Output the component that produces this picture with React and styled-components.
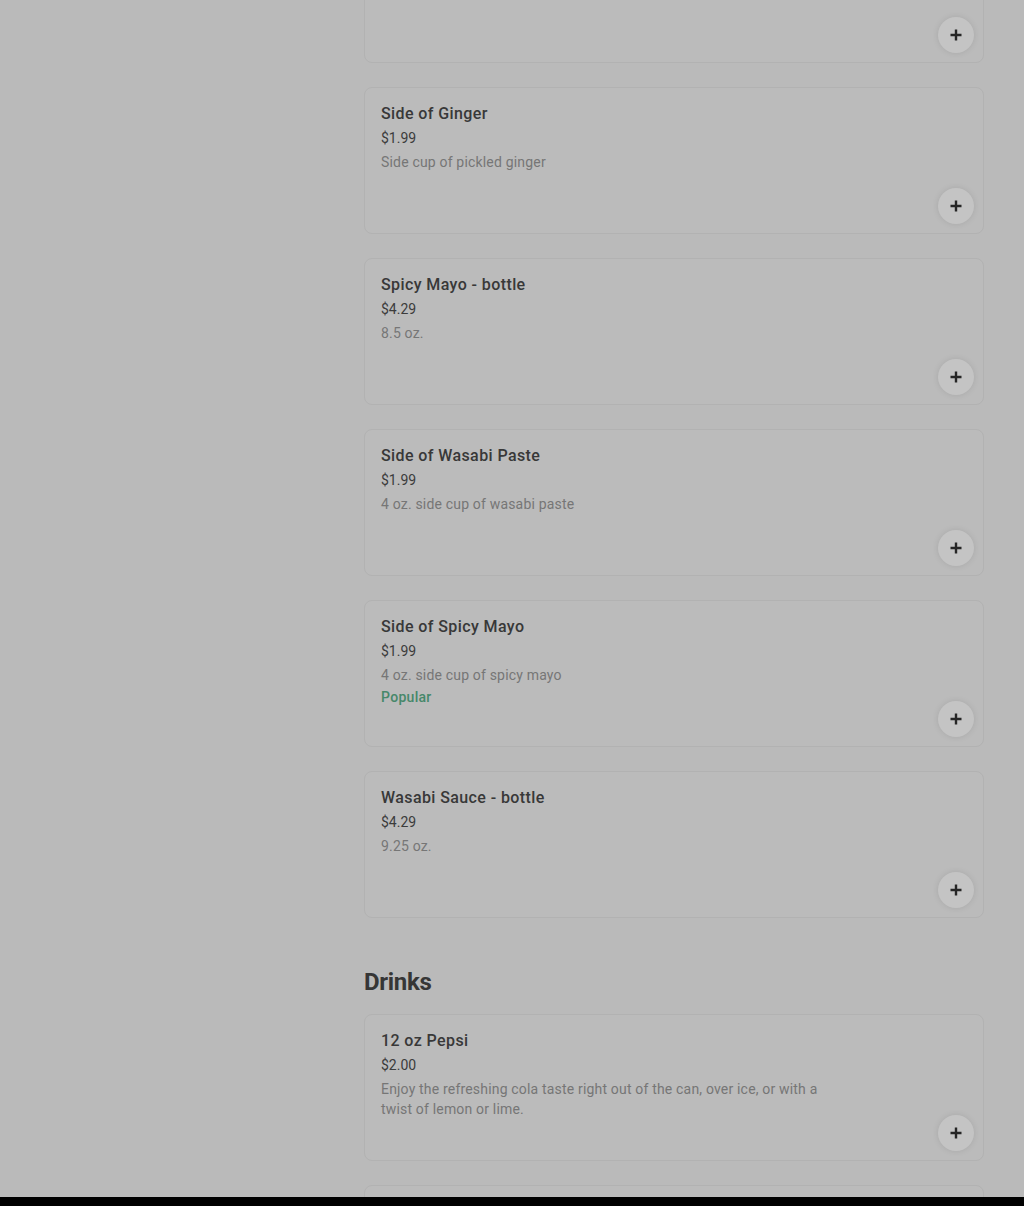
import React from "react";
import styled, { createGlobalStyle } from "styled-components";

const Global = createGlobalStyle`
  html, body { margin: 0; padding: 0; background: #bababa; }
  body { font-family: Roboto, "Liberation Sans", Arial, sans-serif; overflow: hidden; }
  * { box-sizing: border-box; }
`;

const Page = styled.div`
  display: grid;
  grid-template-columns: 364px 620px 1fr;
  height: 1206px;
  overflow: hidden;
`;

const Main = styled.main`
  grid-column: 2;
  margin-top: -84px;
  display: flex;
  flex-direction: column;
`;

const Section = styled.section`
  display: flex;
  flex-direction: column;
`;

const Heading = styled.h2`
  margin: 48px 0 16px;
  font-size: 24px;
  line-height: 32px;
  font-weight: 700;
  color: #363636;
  letter-spacing: -0.3px;
`;

const List = styled.ul`
  list-style: none;
  margin: 0;
  padding: 0;
  display: flex;
  flex-direction: column;
  gap: 24px;
`;

const Card = styled.li`
  position: relative;
  height: 147px;
  border: 1px solid #b2b2b2;
  border-radius: 8px;
  background: #bbbbbb;
  padding: 16px 16px;
  display: flex;
  flex-direction: column;
`;

const Title = styled.div`
  font-size: 16px;
  line-height: 20px;
  font-weight: 500;
  letter-spacing: 0.4px;
  color: #383838;
`;

const Price = styled.div`
  margin-top: 4px;
  font-size: 14px;
  line-height: 20px;
  color: #3c3c3c;
`;

const Desc = styled.div`
  margin-top: 4px;
  max-width: 450px;
  font-size: 14px;
  line-height: 20px;
  letter-spacing: 0.18px;
  color: #767676;
`;

const Tag = styled.div`
  margin-top: 2px;
  font-size: 14px;
  line-height: 20px;
  font-weight: 500;
  letter-spacing: 0.3px;
  color: #46886a;
`;

const AddButton = styled.button`
  position: absolute;
  right: 9px;
  bottom: 9px;
  width: 36px;
  height: 36px;
  border: none;
  border-radius: 50%;
  background: #c4c4c4;
  box-shadow: 0 0 6px rgba(0, 0, 0, 0.1);
  display: flex;
  align-items: center;
  justify-content: center;
  padding: 0;
`;

const BottomBar = styled.div`
  position: fixed;
  left: 0;
  right: 0;
  bottom: 0;
  height: 9px;
  background: #000;
`;

const Plus = () => (
  <svg width="14" height="14" viewBox="0 0 14 14">
    <path d="M7 1.5v11M1.5 7h11" stroke="#262626" strokeWidth="2.4" />
  </svg>
);

const Item = ({ title, price, desc, tag }) => (
  <Card>
    {title && <Title>{title}</Title>}
    {price && <Price>{price}</Price>}
    {desc && <Desc>{desc}</Desc>}
    {tag && <Tag>{tag}</Tag>}
    <AddButton aria-label="Add">
      <Plus />
    </AddButton>
  </Card>
);

const sides = [
  { title: "", price: "", desc: "" },
  { title: "Side of Ginger", price: "$1.99", desc: "Side cup of pickled ginger" },
  { title: "Spicy Mayo - bottle", price: "$4.29", desc: "8.5 oz." },
  { title: "Side of Wasabi Paste", price: "$1.99", desc: "4 oz. side cup of wasabi paste" },
  { title: "Side of Spicy Mayo", price: "$1.99", desc: "4 oz. side cup of spicy mayo", tag: "Popular" },
  { title: "Wasabi Sauce - bottle", price: "$4.29", desc: "9.25 oz." },
];

const drinks = [
  {
    title: "12 oz Pepsi",
    price: "$2.00",
    desc: "Enjoy the refreshing cola taste right out of the can, over ice, or with a twist of lemon or lime.",
  },
  { title: "", price: "", desc: "" },
];

export default function App() {
  return (
    <>
      <Global />
      <Page>
        <Main>
          <Section>
            <List>
              {sides.map((it, i) => (
                <Item key={i} {...it} />
              ))}
            </List>
          </Section>
          <Section>
            <Heading>Drinks</Heading>
            <List>
              {drinks.map((it, i) => (
                <Item key={i} {...it} />
              ))}
            </List>
          </Section>
        </Main>
      </Page>
      <BottomBar />
    </>
  );
}
